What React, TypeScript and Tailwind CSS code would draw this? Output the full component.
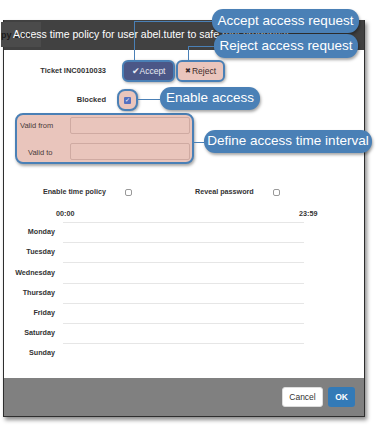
import React from "react";

const DAYS = ["Monday", "Tuesday", "Wednesday", "Thursday", "Friday", "Saturday", "Sunday"];

const Callout = ({ text, className }: { text: string; className: string }) => (
  <div
    className={`absolute flex items-center justify-center rounded-[11px] bg-[#4a80b6] text-white text-[13.5px] font-['Liberation_Sans',Arial,sans-serif] shadow-[1px_2px_3px_rgba(0,0,0,0.35)] ${className}`}
  >
    {text}
  </div>
);

export default function App() {
  return (
    <div className="relative w-[384px] h-[426px] overflow-hidden bg-white pt-[20px] pl-[3px] font-['Liberation_Sans',Arial,sans-serif]">
      <div className="w-[362px] flex flex-col border-x border-b border-[#2e2e2e] shadow-[2px_3px_4px_rgba(0,0,0,0.45)]">
        {/* header */}
        <div className="relative h-[30px] bg-[#414141] flex items-center">
          <div className="absolute left-[-3px] top-[2px] w-[40px] h-[25px] bg-[#4b4b4b] flex items-center">
            <span className="text-[9px] font-bold text-[#1c1c1c] pt-[3px]">py user</span>
          </div>
          <span className="relative pl-[9px] text-white text-[10.5px] whitespace-nowrap">
            Access time policy for user abel.tuter to safe root credential
          </span>
        </div>

        {/* body */}
        <div className="h-[328px] bg-white flex flex-col pt-[10px]">
          <div className="flex items-center h-[22px]">
            <div className="w-[102px] text-right text-[7.5px] font-bold text-[#333]">Ticket INC0010033</div>
            <div className="ml-[16px] flex gap-[1px]">
              <div className="w-[53px] h-[22px] rounded-[6px] border-2 border-[#4a80b6] bg-[#4b5787] flex items-center justify-center text-[8.5px] text-[#e8eaf2] shadow-[1px_1px_3px_rgba(0,0,0,0.35)]">
                ✔Accept
              </div>
              <div className="w-[49px] h-[22px] rounded-[6px] border-2 border-[#4a80b6] bg-[#eac5bc] flex items-center justify-center text-[8.5px] text-[#3a2a2a] shadow-[1px_1px_3px_rgba(0,0,0,0.35)]">
                <span className="text-[7px] mr-[1px]">✖</span>Reject
              </div>
            </div>
          </div>

          <div className="flex items-center h-[22px] mt-[7px]">
            <div className="w-[102px] text-right text-[7.5px] font-bold text-[#333]">Blocked</div>
            <div className="ml-[11px] w-[21px] h-[22px] rounded-[8px] border-2 border-[#4a80b6] bg-[#eac5bc] flex items-center justify-center shadow-[1px_1px_3px_rgba(0,0,0,0.35)]">
              <div className="w-[7px] h-[7px] rounded-[1px] bg-[#5470c0] flex items-center justify-center text-white text-[6px] leading-none">
                ✓
              </div>
            </div>
          </div>

          <div className="ml-[11px] mt-[2px] w-[179px] h-[51px] rounded-[8px] border-2 border-[#4a80b6] bg-[#e9c5bc] shadow-[1px_2px_3px_rgba(0,0,0,0.35)] flex flex-col pt-[2px] gap-[9px]">
            <div className="flex">
              <div className="w-[53px] pl-[3px] pt-[3px] text-[7.5px] text-[#4a3a3a]">Valid from</div>
              <div className="w-[120px] h-[17px] rounded-[2px] border border-[#cfaaa2]" />
            </div>
            <div className="flex">
              <div className="w-[53px] pl-[11px] pt-[4px] text-[7.5px] text-[#4a3a3a]">Valid to</div>
              <div className="w-[120px] h-[17px] rounded-[2px] border border-[#cfaaa2]" />
            </div>
          </div>

          <div className="flex items-center h-[12px] mt-[22px]">
            <div className="w-[102px] text-right text-[7.2px] font-bold text-[#333]">Enable time policy</div>
            <div className="ml-[19px] w-[7px] h-[7px] rounded-[2px] border border-[#999]" />
            <div className="ml-[63px] text-[7.2px] font-bold text-[#333]">Reveal password</div>
            <div className="ml-[19px] w-[7px] h-[7px] rounded-[2px] border border-[#999]" />
          </div>

          <div className="flex h-[12px] mt-[10px] items-center text-[7.2px] font-bold text-[#333]">
            <div className="ml-[52px] w-[18px]">00:00</div>
            <div className="ml-[225px]">23:59</div>
          </div>

          <div className="flex flex-col mt-[2px]">
            {DAYS.map((day) => (
              <div key={day} className="flex h-[20.2px]">
                <div className="w-[51px] text-right text-[7.2px] font-bold text-[#333] self-center pt-[1px]">{day}</div>
                <div className="ml-[8px] w-[241px] border-t border-[#e6e6e6]" />
              </div>
            ))}
          </div>
        </div>

        {/* footer */}
        <div className="h-[38px] bg-[#808080] flex items-start justify-end gap-[5px] pt-[9px] pr-[9px]">
          <div className="w-[41px] h-[20px] rounded-[3px] bg-white border border-[#ddd] flex items-center justify-center text-[8.5px] text-[#333]">
            Cancel
          </div>
          <div className="w-[27px] h-[20px] rounded-[3px] bg-[#337ab7] flex items-center justify-center text-[8.5px] font-bold text-white">
            OK
          </div>
        </div>
      </div>

      {/* annotation connectors */}
      <div className="absolute left-[134px] top-[21px] w-[78px] h-[39px] border-l border-t border-[#4a80b6]" />
      <div className="absolute left-[188px] top-[46px] w-[26px] h-[14px] border-l border-t border-[#4a80b6]" />
      <div className="absolute left-[138px] top-[99px] w-[22px] border-t border-[#4a80b6]" />
      <div className="absolute left-[194px] top-[142px] w-[10px] border-t border-[#4a80b6]" />

      <Callout text="Accept access request" className="left-[212px] top-[9px] w-[147px] h-[24px]" />
      <Callout text="Reject access request" className="left-[214px] top-[34px] w-[144px] h-[24px]" />
      <Callout text="Enable access" className="left-[160px] top-[87px] w-[100px] h-[23px]" />
      <Callout text="Define access time interval" className="left-[204px] top-[130px] w-[168px] h-[23px]" />
    </div>
  );
}
